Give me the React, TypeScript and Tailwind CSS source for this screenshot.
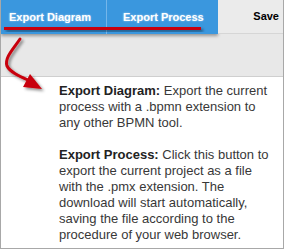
export default function App() {
  return (
    <div className="relative h-[249px] w-[284px] overflow-hidden border-x border-b border-[#a8a8a8] bg-white font-['Liberation_Sans',Arial,sans-serif]">
      {/* toolbar */}
      <div className="flex h-[34px] bg-[#e8e8e8]">
        <div className="flex w-[217px] bg-[#3a97de] shadow-[0_2px_3px_rgba(0,0,0,0.35)]">
          <div className="flex w-[105px] items-center pl-[8px] text-[11px] font-bold text-white [text-shadow:0_0_2px_rgba(255,255,255,0.6)]">
            Export Diagram
          </div>
          <div className="w-px bg-[#74b6ea]" />
          <div className="flex flex-1 items-center pl-[16px] text-[11px] font-bold text-white [text-shadow:0_0_2px_rgba(255,255,255,0.6)]">
            Export Process
          </div>
        </div>
        <div className="flex flex-1 items-center justify-end border-b border-[#d6d6d6] bg-[#ebebeb] pr-[4px] text-[11px] font-bold text-black">
          Save
        </div>
      </div>

      {/* grey band */}
      <div className="h-[43px] border-b border-[#cfcfcf] bg-[#e8e8e8]" />

      {/* help text */}
      <div className="pl-[58px] pt-[6px] text-[13px] leading-[16px] text-[#383838]">
        <p>
          <b className="text-[#222]">Export Diagram:</b> Export the current
          <br />
          process with a .bpmn extension to
          <br />
          any other BPMN tool.
        </p>
        <p className="mt-[16px]">
          <b className="text-[#222]">Export Process:</b> Click this button to
          <br />
          export the current project as a file
          <br />
          with the .pmx extension. The
          <br />
          download will start automatically,
          <br />
          saving the file according to the
          <br />
          procedure of your web browser.
        </p>
      </div>

      {/* annotation: underline + arrow */}
      <svg className="pointer-events-none absolute left-0 top-0" width="284" height="120" viewBox="0 0 284 120">
        <defs>
          <filter id="sh" x="-20%" y="-50%" width="140%" height="200%">
            <feDropShadow dx="2" dy="2" stdDeviation="1.5" floodColor="#000" floodOpacity="0.45" />
          </filter>
        </defs>
        <rect x="3" y="27" width="197" height="3" fill="#c8000a" filter="url(#sh)" />
        <g filter="url(#sh)">
          <path d="M19 39 C 13 48, 3 58, 6 66 C 9 72, 18 76, 27 80" fill="none" stroke="#c8000a" strokeWidth="3" strokeLinecap="round" />
          <polygon points="29,74 41,89 22,87" fill="#c8000a" />
        </g>
      </svg>
    </div>
  )
}
